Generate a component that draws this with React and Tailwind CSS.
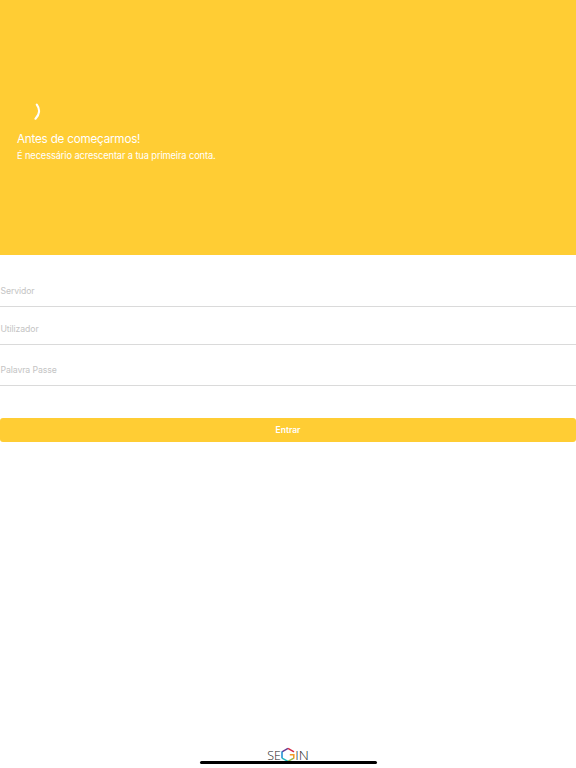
const font = "font-['Inter','Liberation_Sans',sans-serif]";

function Field({ label, className }) {
  return (
    <div className={`flex items-end border-b border-[#dadada] pl-[0.5px] ${className}`}>
      <span className="text-[8.7px] leading-[12px] tracking-[-0.1px] text-[#c4c4c4]">{label}</span>
    </div>
  );
}

function Logo() {
  return (
    <svg className="block overflow-visible" width="42" height="17" viewBox="0 0 42 17" fill="none" role="img">
      <text x="0.2" y="12.6" textLength="13.6" lengthAdjust="spacingAndGlyphs" fill="#222" fontFamily="Open Sans, sans-serif" fontWeight="300" fontSize="13.5">SE</text>
      <text x="28.2" y="12.6" textLength="13.6" lengthAdjust="spacingAndGlyphs" fill="#222" fontFamily="Open Sans, sans-serif" fontWeight="300" fontSize="13.5">IN</text>
      <g strokeWidth="1.5">
        <path d="M15 4.8 21 1.3" stroke="#653a92" />
        <path d="M21 1.3 27 4.8" stroke="#d52b45" />
        <path d="M15 4.5v6.8" stroke="#168bd2" />
        <path d="M15 11.2l6 3.2" stroke="#20b8be" />
        <path d="M21 14.4l5.8-3.2" stroke="#91b94b" />
        <path d="M26.8 11.4V7.8h-4" stroke="#f39a22" />
      </g>
    </svg>
  );
}

export default function App() {
  return (
    <main className={`flex h-[768px] w-full flex-col overflow-hidden bg-white ${font}`}>
      <header className="h-[255px] shrink-0 bg-[#ffcd34] pl-[17px] pt-[103px] text-white">
        <svg className="ml-[17px] block" width="8" height="18" viewBox="0 0 8 18" fill="none">
          <path d="M2.8 1.6C6.2 6.2 5.6 11.6 1.5 15.7" stroke="white" strokeWidth="2.2" strokeLinecap="round" />
        </svg>
        <h1 className="mt-[10px] text-[11.7px] leading-[16px] tracking-[-0.22px]">Antes de começarmos!</h1>
        <p className="mt-[2px] text-[9.3px] leading-[13px] tracking-[-0.12px]">É necessário acrescentar a tua primeira conta.</p>
      </header>
      <form className="flex flex-col">
        <Field label="Servidor" className="h-[52px] pb-[9px]" />
        <Field label="Utilizador" className="h-[38px] pb-[9px]" />
        <Field label="Palavra Passe" className="h-[41px] pb-[9px]" />
        <button type="button" className="mt-[31.5px] h-[24.5px] rounded-[3px] bg-[#ffcd34] text-[8.5px] leading-[12px] font-semibold text-white">Entrar</button>
      </form>
      <footer className="mt-auto flex flex-col items-center pb-[4.5px]">
        <Logo />
        <div className="-mt-[3px] h-[3px] w-[177px] rounded-full bg-black" />
      </footer>
    </main>
  );
}
